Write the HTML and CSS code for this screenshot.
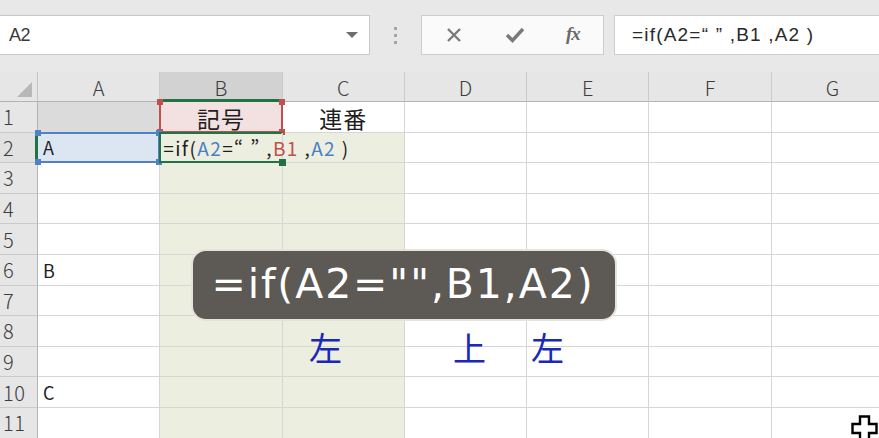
FILE: index.html
```html
<!DOCTYPE html>
<html lang="ja">
<head>
<meta charset="utf-8">
<title>Excel</title>
<link rel="stylesheet" href="styles.css">
</head>
<body>
<div class="app">
  <div class="toolbar">
    <div class="namebox">
      <span class="namebox-text">A2</span>
      <span class="namebox-arrow"></span>
    </div>
    <div class="grip"><i></i><i></i><i></i></div>
    <div class="fbuttons">
      <svg class="ico" width="20" height="20" viewBox="0 0 20 20"><path d="M4 4 L16 16 M16 4 L4 16" stroke="#7a7a7a" stroke-width="2.4" fill="none"/></svg>
      <svg class="ico" width="22" height="20" viewBox="0 0 22 20"><path d="M3 10 L8.5 15.5 L19 4" stroke="#7a7a7a" stroke-width="3.4" fill="none" stroke-linejoin="miter"/></svg>
      <span class="fx">fx</span>
    </div>
    <div class="formula">=if(A2=“ ” ,B1 ,A2 )</div>
  </div>

  <div class="sheet">
    <div class="corner"><span class="tri"></span></div>
    <div class="ch">A</div>
    <div class="ch ch-sel">B</div>
    <div class="ch">C</div>
    <div class="ch">D</div>
    <div class="ch">E</div>
    <div class="ch">F</div>
    <div class="ch">G</div>

    <div class="rh">1</div>
    <div class="c c-gray"></div>
    <div class="c c-pink ref-red center jp">記号</div>
    <div class="c center jp">連番</div>
    <div class="c"></div><div class="c"></div><div class="c"></div><div class="c"></div>

    <div class="rh rh-sel">2</div>
    <div class="c c-blue ref-blue">A</div>
    <div class="c c-green active"><span>=if(<b class="t-blue">A2</b>=“ ” ,<b class="t-red">B1</b> ,<b class="t-blue">A2</b> )</span></div>
    <div class="c c-green"></div>
    <div class="c"></div><div class="c"></div><div class="c"></div><div class="c"></div>

    <div class="rh">3</div>
    <div class="c"></div><div class="c c-green"></div><div class="c c-green"></div>
    <div class="c"></div><div class="c"></div><div class="c"></div><div class="c"></div>

    <div class="rh">4</div>
    <div class="c"></div><div class="c c-green"></div><div class="c c-green"></div>
    <div class="c"></div><div class="c"></div><div class="c"></div><div class="c"></div>

    <div class="rh">5</div>
    <div class="c"></div><div class="c c-green"></div><div class="c c-green"></div>
    <div class="c"></div><div class="c"></div><div class="c"></div><div class="c"></div>

    <div class="rh">6</div>
    <div class="c">B</div><div class="c c-green"></div><div class="c c-green"></div>
    <div class="c"></div><div class="c"></div><div class="c"></div><div class="c"></div>

    <div class="rh">7</div>
    <div class="c"></div><div class="c c-green"></div><div class="c c-green"></div>
    <div class="c"></div><div class="c"></div><div class="c"></div><div class="c"></div>

    <div class="rh">8</div>
    <div class="c"></div><div class="c c-green"></div><div class="c c-green"></div>
    <div class="c"></div><div class="c"></div><div class="c"></div><div class="c"></div>

    <div class="rh">9</div>
    <div class="c"></div><div class="c c-green"></div><div class="c c-green"></div>
    <div class="c"></div><div class="c"></div><div class="c"></div><div class="c"></div>

    <div class="rh">10</div>
    <div class="c">C</div><div class="c c-green"></div><div class="c c-green"></div>
    <div class="c"></div><div class="c"></div><div class="c"></div><div class="c"></div>

    <div class="rh">11</div>
    <div class="c"></div><div class="c c-green"></div><div class="c c-green"></div>
    <div class="c"></div><div class="c"></div><div class="c"></div><div class="c"></div>
  </div>

  <div class="caption">=if(A2="",B1,A2)</div>
  <div class="note note-1">左</div>
  <div class="note note-2">上</div>
  <div class="note note-3">左</div>

  <svg class="cursor" width="28" height="28" viewBox="0 0 28 28">
    <path d="M9 1.5 H18 V9 H25.5 V18 H18 V25.5 H9 V18 H1.5 V9 H9 Z" fill="#fff" stroke="#000" stroke-width="2.4" stroke-linejoin="miter"/>
  </svg>
</div>
</body>
</html>
```
FILE: styles.css
```css
* { box-sizing: border-box; }
html, body { margin: 0; padding: 0; }
body {
  width: 879px;
  height: 438px;
  overflow: hidden;
  background: #ffffff;
  font-family: "Noto Sans CJK JP", "Liberation Sans", sans-serif;
  color: #222;
}
.app {
  position: relative;
  width: 879px;
  height: 438px;
  overflow: hidden;
}

/* ---------- formula bar ---------- */
.toolbar {
  height: 72px;
  background: #e8e8e8;
  display: flex;
  align-items: flex-start;
  padding-top: 15px;
}
.namebox {
  width: 370px;
  height: 40px;
  background: #fff;
  border: 1px solid #c9c9c9;
  border-left: none;
  display: flex;
  align-items: center;
  justify-content: space-between;
  padding: 0 10px 0 9px;
}
.namebox-text {
  font-family: "Liberation Sans", sans-serif;
  font-size: 18px;
  color: #3a3a3a;
  letter-spacing: -0.5px;
}
.namebox-arrow {
  width: 0;
  height: 0;
  border-left: 6px solid transparent;
  border-right: 6px solid transparent;
  border-top: 6px solid #6e6e6e;
  margin-right: 1px;
}
.grip {
  width: 51px;
  height: 40px;
  display: flex;
  flex-direction: column;
  align-items: center;
  justify-content: center;
  gap: 4px;
}
.grip i {
  display: block;
  width: 3px;
  height: 3px;
  background: #a4a4a4;
}
.fbuttons {
  width: 183px;
  height: 40px;
  background: #fafafa;
  border: 1px solid #cdcdcd;
  display: flex;
  align-items: center;
  padding-left: 22px;
  gap: 0;
}
.fbuttons .ico:first-child { margin-right: 40px; }
.fbuttons .ico:nth-child(2) { margin-right: 40px; }
.fx {
  font-family: "Liberation Serif", serif;
  font-style: italic;
  font-weight: bold;
  font-size: 19px;
  color: #6a6a6a;
  letter-spacing: -1px;
  margin-top: -2px;
}
.formula {
  margin-left: 10px;
  flex: 1;
  height: 40px;
  background: #fff;
  border: 1px solid #cdcdcd;
  border-right: none;
  display: flex;
  align-items: center;
  padding-left: 17px;
  font-family: "Liberation Sans", sans-serif;
  font-size: 19px;
  letter-spacing: 1.2px;
  white-space: pre;
  color: #2a2a2a;
}

/* ---------- sheet ---------- */
.sheet {
  display: grid;
  grid-template-columns: 38px repeat(7, 122.3px);
  grid-template-rows: 30px repeat(11, 30.6px);
  font-size: 18px;
}
.corner {
  background: #e6e6e6;
  border-right: 1px solid #c4c4c4;
  border-bottom: 1px solid #b3b3b3;
  position: relative;
}
.tri {
  position: absolute;
  right: 5px;
  bottom: 4px;
  width: 0;
  height: 0;
  border-left: 15px solid transparent;
  border-bottom: 15px solid #b7b7b7;
}
.ch {
  background: #e6e6e6;
  border-right: 1px solid #cacaca;
  border-bottom: 1px solid #b3b3b3;
  display: flex;
  align-items: center;
  justify-content: center;
  font-size: 20px;
  font-weight: 300;
  color: #3c3c3c;
  padding-top: 2px;
}
.ch-sel {
  background: #d2d2d2;
  border-bottom: 3px solid #217346;
  padding-top: 4px;
}
.rh {
  background: #e6e6e6;
  border-right: 1px solid #b3b3b3;
  border-bottom: 1px solid #cacaca;
  display: flex;
  align-items: center;
  padding-left: 3px;
  font-size: 20px;
  font-weight: 300;
  color: #3c3c3c;
  letter-spacing: 0.5px;
}
.rh-sel {
  background: #e1e1e1;
  border-right: 3px solid #217346;
}
.c {
  position: relative;
  border-right: 1px solid #d6d6d6;
  border-bottom: 1px solid #d6d6d6;
  display: flex;
  align-items: center;
  padding-left: 5px;
  white-space: nowrap;
  color: #1e1e1e;
}
.center { justify-content: center; padding-left: 0; }
.jp { font-size: 23px; letter-spacing: 1px; padding-top: 2px; }
.c-gray { background: #dbdbdb; }
.c-pink { background: #f3e1e1; }
.c-blue { background: #dce6f3; }
.c-green { background: #eceedf; }

/* range frames */
.ref-red, .ref-blue { z-index: 1; }
.ref-red::after, .ref-blue::after, .active::after {
  content: "";
  position: absolute;
  inset: -1px -1px -1px -1px;
  border: 2px solid;
  pointer-events: none;
}
.ref-red::before, .ref-blue::before, .active::before {
  content: "";
  position: absolute;
  inset: -3px;
  pointer-events: none;
  z-index: 1;
}
.ref-red::after { border-color: #c0504d; border-top-color: transparent; }
.ref-red::before {
  background:
    linear-gradient(#c0504d, #c0504d) left top / 6px 6px no-repeat,
    linear-gradient(#c0504d, #c0504d) right top / 6px 6px no-repeat,
    linear-gradient(#c0504d, #c0504d) left bottom / 6px 6px no-repeat,
    linear-gradient(#c0504d, #c0504d) right bottom / 6px 6px no-repeat;
}
.ref-blue::after { border-color: #4f81c7; border-left-color: transparent; }
.ref-blue::before {
  background:
    linear-gradient(#4f81c7, #4f81c7) left top / 6px 6px no-repeat,
    linear-gradient(#4f81c7, #4f81c7) right top / 6px 6px no-repeat,
    linear-gradient(#4f81c7, #4f81c7) left bottom / 6px 6px no-repeat,
    linear-gradient(#4f81c7, #4f81c7) right bottom / 6px 6px no-repeat;
}
.active { z-index: 2; padding-left: 3px; }
.active::after { border-color: #217346; border-right-color: transparent; }
.active::before {
  background: linear-gradient(#217346, #217346) right bottom / 7px 7px no-repeat;
  inset: -3px -4px -4px -3px;
}
.active span {
  position: relative;
  z-index: 3;
  font-size: 19px;
  letter-spacing: 1.4px;
  white-space: pre;
}
.active b { font-weight: normal; }
.t-blue { color: #4a7fc7; }
.t-red { color: #c0504d; }

/* ---------- overlays ---------- */
.caption {
  position: absolute;
  left: 191px;
  top: 249px;
  width: 426px;
  height: 72px;
  background: #5d5954;
  border: 2px solid #e4e4dc;
  border-radius: 15px;
  color: #ffffff;
  font-family: "DejaVu Sans", "Noto Sans", sans-serif;
  font-size: 41px;
  letter-spacing: 1.9px;
  display: flex;
  align-items: center;
  justify-content: center;
  padding-bottom: 3px;
  padding-right: 2px;
}
.note {
  position: absolute;
  top: 327px;
  font-size: 33px;
  color: #1a28b8;
  line-height: 40px;
}
.note-1 { left: 309px; }
.note-2 { left: 453px; }
.note-3 { left: 531px; }
.cursor {
  position: absolute;
  left: 851px;
  top: 415px;
}
```
